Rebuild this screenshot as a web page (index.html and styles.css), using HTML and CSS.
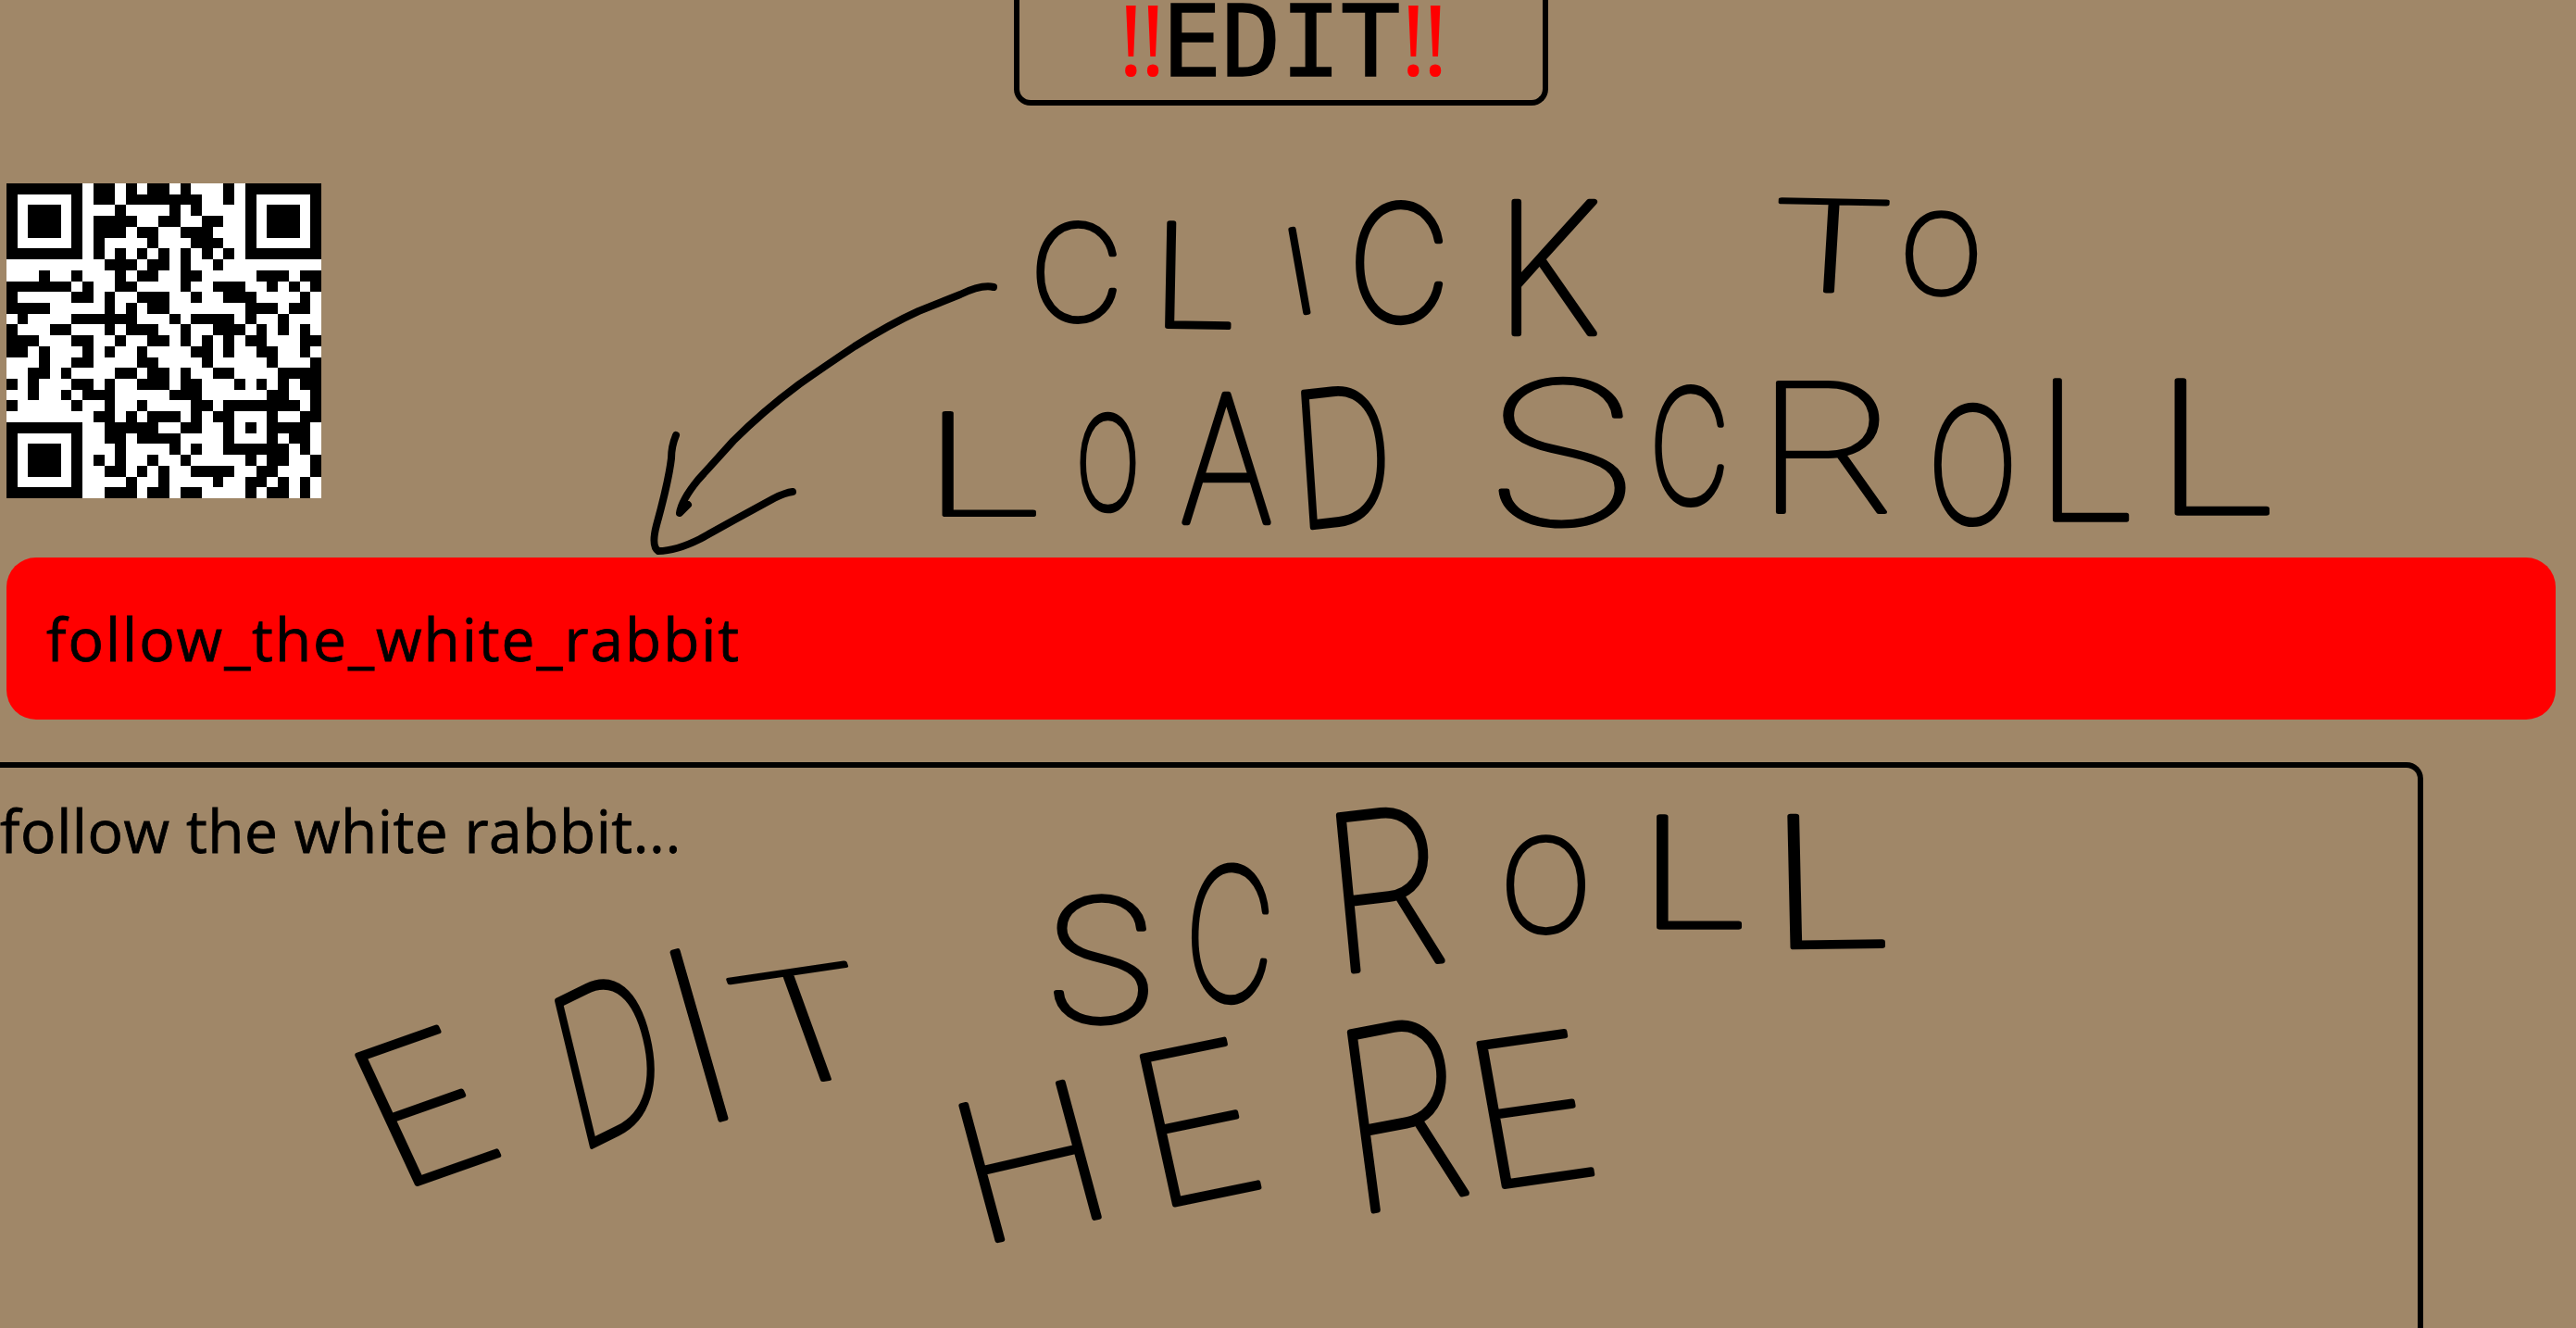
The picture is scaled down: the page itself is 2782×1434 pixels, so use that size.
FILE: index.html
```html
<!DOCTYPE html>
<html lang="en">
<head>
<meta charset="utf-8">
<title>Edit scroll</title>
<link rel="stylesheet" href="styles.css">
</head>
<body>
<header class="head"><h1 class="title"><span class="bang">!!</span>EDIT<span class="bang">!!</span></h1></header>
<svg class="qr" viewBox="0 0 29 29" role="img" aria-label="QR code" shape-rendering="crispEdges">
<rect width="29" height="29" fill="#fff"/>
<path stroke="#000" d="M0 .5h7m1 0h2m1 0h1m1 0h2m1 0h1m3 0h1m1 0h7
M0 1.5h1m5 0h1m1 0h2m1 0h7m2 0h1m1 0h1m5 0h1
M0 2.5h1m1 0h3m1 0h1m3 0h1m4 0h1m1 0h1m4 0h1m1 0h3m1 0h1
M0 3.5h1m1 0h3m1 0h1m1 0h4m2 0h2m2 0h2m2 0h1m1 0h3m1 0h1
M0 4.5h1m1 0h3m1 0h1m1 0h3m1 0h2m2 0h3m3 0h1m1 0h3m1 0h1
M0 5.5h1m5 0h1m1 0h1m4 0h1m3 0h3m2 0h1m5 0h1
M0 6.5h7m1 0h1m1 0h1m1 0h1m1 0h1m1 0h1m1 0h1m1 0h1m1 0h7
M9 7.5h3m1 0h2m1 0h1m2 0h1
M3 8.5h1m2 0h1m3 0h1m1 0h2m2 0h2m5 0h3m1 0h2
M0 9.5h6m1 0h1m2 0h2m4 0h1m2 0h3m2 0h1m1 0h1m1 0h1
M0 10.5h1m5 0h2m1 0h1m2 0h3m2 0h1m2 0h3m4 0h1
M0 11.5h4m5 0h1m1 0h1m1 0h2m7 0h3m1 0h2
M1 12.5h1m4 0h6m3 0h1m1 0h4m1 0h1m2 0h1
M0 13.5h1m3 0h2m3 0h1m1 0h3m2 0h1m2 0h3m1 0h1m1 0h1m1 0h1
M0 14.5h3m3 0h2m2 0h1m2 0h2m1 0h1m1 0h1m1 0h1m1 0h2m3 0h2
M0 15.5h2m1 0h1m3 0h1m1 0h1m2 0h1m4 0h2m1 0h1m2 0h2m2 0h1
M3 16.5h1m2 0h2m4 0h2m4 0h1m5 0h1m3 0h1
M2 17.5h2m1 0h1m4 0h2m1 0h2m1 0h1m2 0h2m4 0h4
M0 18.5h1m1 0h1m3 0h2m1 0h1m2 0h3m1 0h2m3 0h1m1 0h1m1 0h1m1 0h2
M2 19.5h1m2 0h1m1 0h3m5 0h3m6 0h2m2 0h1
M0 20.5h1m5 0h1m2 0h1m2 0h1m4 0h2m1 0h7m1 0h1
M8 21.5h2m1 0h1m1 0h3m1 0h1m1 0h2m3 0h1m2 0h2
M0 22.5h7m2 0h5m2 0h2m2 0h1m1 0h1m1 0h4
M0 23.5h1m5 0h1m2 0h2m1 0h4m4 0h1m3 0h1m1 0h2
M0 24.5h1m1 0h3m1 0h1m3 0h1m4 0h1m1 0h1m2 0h6m1 0h1
M0 25.5h1m1 0h3m1 0h1m1 0h1m1 0h1m2 0h1m2 0h1m5 0h1m1 0h2m2 0h1
M0 26.5h1m1 0h3m1 0h1m2 0h2m1 0h1m1 0h1m2 0h4m2 0h2m3 0h1
M0 27.5h1m5 0h1m4 0h1m2 0h1m4 0h1m2 0h2m1 0h1m1 0h1
M0 28.5h7m2 0h3m1 0h2m1 0h2m4 0h1m1 0h2m1 0h1"/>
</svg>
<button class="scroll-name">follow_the_white_rabbit</button>
<main class="editor">follow the white rabbit...</main>

<svg class="notes" viewBox="0 0 2782 1434">
<path class="arrow" d="M1073 310Q1060 307 1037 318L992 336Q961 350 923 374Q890 396 863 415Q824 444 792 476L754 518Q736 540 734 554L743 545M730 470Q725 482 725 495Q722 520 709 567Q703 590 711 595Q730 595 756 582L792 562L836 538Q848 532 856 531"/>
<text><tspan x="1112" y="346" font-size="143" textLength="101">C</tspan><tspan x="1242" y="352" font-size="153" textLength="95" rotate="1">L</tspan><tspan x="1396" y="340" font-size="125" rotate="-10">I</tspan><tspan x="1456" y="346" font-size="172" textLength="110" class="narrow">C</tspan><tspan x="1614" y="360" font-size="195" textLength="114" class="narrow">K</tspan></text>
<text><tspan x="1904" y="313" font-size="135" textLength="142" rotate="2" class="wide">T</tspan><tspan x="2052" y="317" font-size="118" textLength="89">O</tspan></text>
<text><tspan x="993" y="556" font-size="151" textLength="138" class="wide">L</tspan><tspan x="1162" y="550" font-size="138" textLength="69" class="narrow">O</tspan><tspan x="1274" y="564" font-size="190" textLength="101" class="narrow">A</tspan><tspan x="1400" y="571" font-size="200" textLength="109" rotate="-5" class="narrow">D</tspan></text>
<text><tspan x="1599" y="566" font-size="213" textLength="176" class="wide">S</tspan><tspan x="1781" y="543" font-size="169" textLength="87" class="narrow">C</tspan><tspan x="1892" y="553" font-size="193" textLength="155" class="wide">R</tspan><tspan x="2082" y="564" font-size="171" textLength="97" class="narrow">O</tspan><tspan x="2197" y="561" font-size="206" textLength="112">L</tspan><tspan x="2324" y="554" font-size="196" textLength="139">L</tspan></text>
<text><tspan x="426" y="1287" font-size="206" textLength="138" rotate="-22">E</tspan><tspan x="622" y="1246" font-size="228" textLength="114" rotate="-19" class="narrow">D</tspan><tspan x="750" y="1217" font-size="258" rotate="-16">I</tspan><tspan x="814" y="1177" font-size="165" textLength="160" rotate="-13" class="wide">T</tspan></text>
<text><tspan x="1125" y="1103" font-size="183" textLength="128">S</tspan><tspan x="1277" y="1076" font-size="197" textLength="97" rotate="3" class="narrow">C</tspan><tspan x="1438" y="1051" font-size="232" textLength="130" rotate="-6" class="narrow">R</tspan><tspan x="1620" y="1006" font-size="139" textLength="99">O</tspan><tspan x="1768" y="1001" font-size="163" textLength="123">L</tspan><tspan x="1909" y="1023" font-size="194" textLength="139" rotate="-1">L</tspan></text>
<text><tspan x="1053" y="1345" font-size="206" textLength="163" rotate="-14">H</tspan><tspan x="1243" y="1306" font-size="225" textLength="136" rotate="-12">E</tspan><tspan x="1458" y="1312" font-size="268" textLength="138" rotate="-9" class="narrow">R</tspan><tspan x="1598" y="1285" font-size="215" textLength="140" rotate="-9">E</tspan></text>
</svg>
<script src="notes.js"></script>
</body>
</html>
```
FILE: notes.js
```js
// Stretch each letter to its own width, not only the gap after it.
document.querySelectorAll('.notes tspan[textLength]').forEach(function (t) {
  t.setAttribute('lengthAdjust', 'spacingAndGlyphs');
});
```
FILE: styles.css
```css
* { box-sizing: border-box; }
body {
  margin: 0;
  height: 1434px;
  overflow: hidden;
  display: flex;
  flex-direction: column;
  align-items: flex-start;
  background: #a08768;
  color: #000;
  font-family: "Comic Sans MS", "Open Sans", sans-serif;
}
body > * { flex: none; }
.head {
  width: 577px;
  height: 114px;
  margin-left: 1095px;
  border: 6px solid #000;
  border-top: 0;
  border-radius: 0 0 18px 18px;
  display: flex;
  justify-content: center;
}
.title {
  margin: 0;
  font: 107px/82px "DejaVu Sans Mono", monospace;
  white-space: nowrap;
  -webkit-text-stroke: 1.5px #000;
}
.bang {
  color: #f00;
  font-family: "Open Sans", sans-serif;
  font-size: 107px;
  letter-spacing: -4.5px;
  -webkit-text-stroke: 0;
}
.qr { width: 340px; height: 340px; margin: 84px 0 0 7px; display: block; }
.scroll-name {
  width: 2753px;
  height: 175px;
  margin: 64px 0 0 7px;
  padding: 0 0 0 43px;
  border: 0;
  border-radius: 32px;
  background: #f00;
  color: #000;
  font-family: inherit;
  font-size: 64px;
  line-height: 88px;
  letter-spacing: 1.95px;
  text-align: left;
  -webkit-text-stroke: 0.8px #000;
}
.editor {
  width: 2617px;
  height: 640px;
  margin-top: 46px;
  padding-top: 24px;
  border: 6px solid #000;
  border-left: 0;
  border-radius: 0 18px 0 0;
  font-size: 64px;
  line-height: 88px;
  letter-spacing: 0.55px;
  -webkit-text-stroke: 0.8px #000;
}
/* pen notes lie over the whole page */
.notes { position: absolute; left: 0; top: 0; width: 2782px; height: 1434px; pointer-events: none; }
.notes text { font-family: Inter, sans-serif; font-weight: 100; stroke: #000; stroke-width: 5.5; stroke-linejoin: round; }
.notes .narrow { stroke-width: 6.5; }
.notes .wide { stroke-width: 4; }
.arrow { fill: none; stroke: #000; stroke-width: 8; stroke-linecap: round; stroke-linejoin: round; }
```
